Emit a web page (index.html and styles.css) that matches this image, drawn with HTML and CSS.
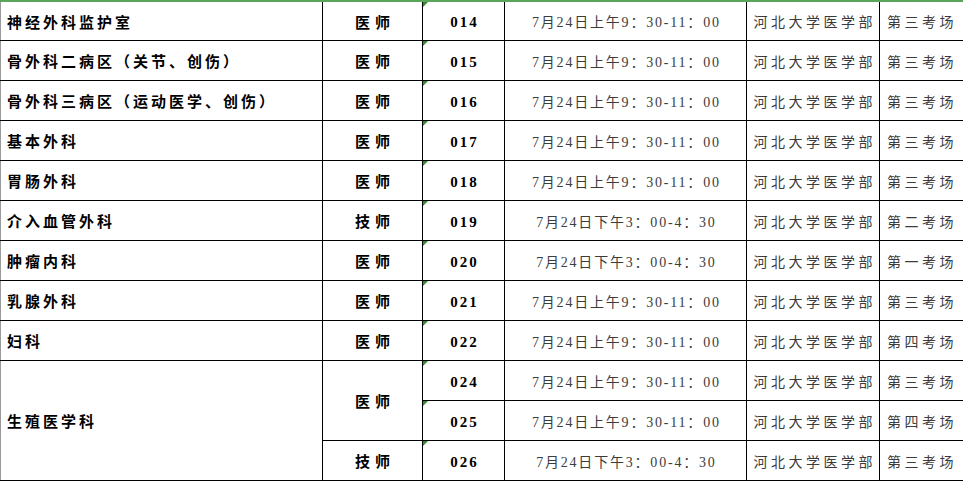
FILE: index.html
```html
<!DOCTYPE html>
<html lang="zh-CN">
<head>
<meta charset="utf-8">
<title>考场安排</title>
<link rel="stylesheet" href="styles.css">
</head>
<body>
<table class="sheet">
  <colgroup>
    <col class="c-dept"><col class="c-role"><col class="c-code"><col class="c-time"><col class="c-place"><col class="c-room">
  </colgroup>
  <tbody>
    <tr class="first"><td class="dept">神经外科监护室</td><td class="role">医师</td><td class="code">014</td><td class="time">7月24日上午9：30-11：00</td><td class="place">河北大学医学部</td><td class="room">第三考场</td></tr>
    <tr><td class="dept">骨外科二病区（关节、创伤）</td><td class="role">医师</td><td class="code">015</td><td class="time">7月24日上午9：30-11：00</td><td class="place">河北大学医学部</td><td class="room">第三考场</td></tr>
    <tr><td class="dept">骨外科三病区（运动医学、创伤）</td><td class="role">医师</td><td class="code">016</td><td class="time">7月24日上午9：30-11：00</td><td class="place">河北大学医学部</td><td class="room">第三考场</td></tr>
    <tr><td class="dept">基本外科</td><td class="role">医师</td><td class="code">017</td><td class="time">7月24日上午9：30-11：00</td><td class="place">河北大学医学部</td><td class="room">第三考场</td></tr>
    <tr><td class="dept">胃肠外科</td><td class="role">医师</td><td class="code">018</td><td class="time">7月24日上午9：30-11：00</td><td class="place">河北大学医学部</td><td class="room">第三考场</td></tr>
    <tr><td class="dept">介入血管外科</td><td class="role">技师</td><td class="code">019</td><td class="time">7月24日下午3：00-4：30</td><td class="place">河北大学医学部</td><td class="room">第二考场</td></tr>
    <tr><td class="dept">肿瘤内科</td><td class="role">医师</td><td class="code">020</td><td class="time">7月24日下午3：00-4：30</td><td class="place">河北大学医学部</td><td class="room">第一考场</td></tr>
    <tr><td class="dept">乳腺外科</td><td class="role">医师</td><td class="code">021</td><td class="time">7月24日上午9：30-11：00</td><td class="place">河北大学医学部</td><td class="room">第三考场</td></tr>
    <tr><td class="dept">妇科</td><td class="role">医师</td><td class="code">022</td><td class="time">7月24日上午9：30-11：00</td><td class="place">河北大学医学部</td><td class="room">第四考场</td></tr>
    <tr><td class="dept" rowspan="3">生殖医学科</td><td class="role" rowspan="2">医师</td><td class="code">024</td><td class="time">7月24日上午9：30-11：00</td><td class="place">河北大学医学部</td><td class="room">第三考场</td></tr>
    <tr><td class="code">025</td><td class="time">7月24日上午9：30-11：00</td><td class="place">河北大学医学部</td><td class="room">第四考场</td></tr>
    <tr><td class="role">技师</td><td class="code">026</td><td class="time">7月24日下午3：00-4：30</td><td class="place">河北大学医学部</td><td class="room">第三考场</td></tr>
  </tbody>
</table>
</body>
</html>
```
FILE: styles.css
```css
html, body {
  margin: 0;
  padding: 0;
  background: #fff;
  overflow: hidden;
}

.sheet {
  border-collapse: collapse;
  table-layout: fixed;
  width: 979px;
  border-top: 2px solid #5aa55a;
  border-left: 1px solid #9a9a9a;
  font-family: "Liberation Serif", "Noto Sans CJK SC", serif;
}

.c-dept { width: 322px; }
.c-role { width: 100px; }
.c-code { width: 82px; }
.c-time { width: 242px; }
.c-place { width: 133px; }
.c-room { width: 100px; }

.sheet td {
  border: 1px solid #000;
  padding: 0;
  height: 39px;
  vertical-align: middle;
  white-space: nowrap;
  overflow: hidden;
}

.sheet tr.first td {
  border-top: 2px solid #5aa55a;
  height: 38px;
}

.sheet td.dept {
  border-left: 1px solid #9a9a9a;
  padding-left: 6px;
  font-size: 15px;
  font-weight: bold;
  letter-spacing: 3px;
  color: #000;
  text-align: left;
}

.sheet td.role {
  text-align: center;
  font-size: 15px;
  font-weight: bold;
  letter-spacing: 5px;
  text-indent: 5px;
  color: #000;
}

.sheet td.code {
  position: relative;
  text-align: center;
  font-size: 15px;
  font-weight: bold;
  letter-spacing: 2px;
  text-indent: 2px;
  padding-top: 3px;
  height: 36px;
  color: #000;
}

.sheet tr.first td.code {
  height: 35px;
}

.sheet td.code::before {
  content: "";
  position: absolute;
  left: 0;
  top: 0;
  border-top: 5px solid #2e8b2e;
  border-right: 5px solid transparent;
}

.sheet td.time {
  text-align: center;
  font-size: 14px;
  letter-spacing: 1.8px;
  text-indent: 1.8px;
  color: #3c3c3c;
}

.sheet td.place {
  text-align: center;
  font-size: 14px;
  letter-spacing: 3.5px;
  text-indent: 3.5px;
  color: #3c3c3c;
}

.sheet td.room {
  padding-left: 7px;
  font-size: 14px;
  letter-spacing: 3.5px;
  color: #3c3c3c;
}
```
